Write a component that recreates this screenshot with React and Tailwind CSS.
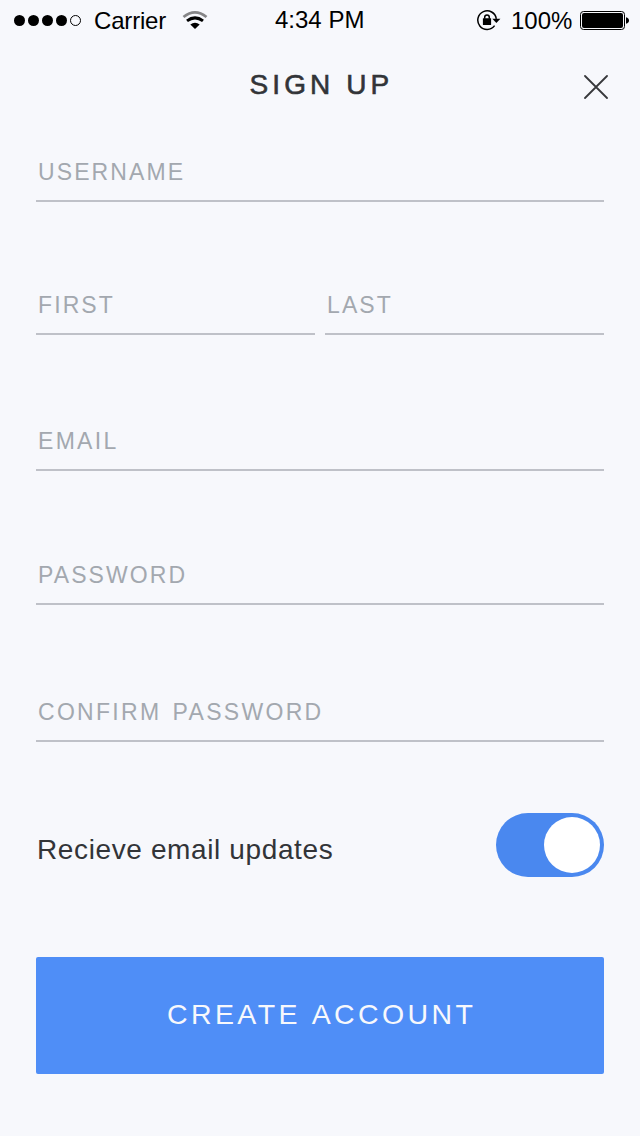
function StatusBar() {
  return (
    <header className="flex h-10 items-start text-black">
      <div className="flex w-[275px] pl-3.5">
        <svg className="mt-3.5 h-3 w-[68px]" viewBox="0 0 68 12">
          <circle cx="5.5" cy="6.5" r="5.5" />
          <circle cx="19.5" cy="6.5" r="5.5" />
          <circle cx="33.5" cy="6.5" r="5.5" />
          <circle cx="47.5" cy="6.5" r="5.5" />
          <circle cx="61.5" cy="6.5" r="5" fill="none" stroke="black" strokeWidth="1" />
        </svg>
        <span className="ml-3 mt-[7px] text-[24px] leading-7 tracking-[-0.18px]">Carrier</span>
        <svg className="ml-4 mt-2.5 h-5 w-[26px]" viewBox="0 0 26 20" fill="none">
          <path d="M1.5 7Q13 -2.2 24.5 7" stroke="#858587" strokeWidth="2.8" />
          <path d="M5 10.9Q13 4.8 21 10.9" stroke="black" strokeWidth="3" />
          <path d="M8.3 14.6Q13 10.8 17.7 14.6L13 19Z" fill="black" />
        </svg>
      </div>
      <span className="mt-1.5 w-[201px] text-[24px] leading-7">4:34 PM</span>
      <svg className="mt-[9px] h-[22px] w-[25px]" viewBox="0 0 25 22" fill="none">
        <path d="M20.3 9.8A9.3 9.3 0 1 0 18.6 16.6" stroke="black" strokeWidth="1.5" />
        <path d="M16.3 9.8H24.4L20.4 14Z" fill="black" />
        <rect x="6.9" y="9.3" width="8.2" height="6.7" rx="0.5" fill="black" />
        <path d="M8.7 9.8V8.2a2.3 2.3 0 0 1 4.6 0V9.8" stroke="black" strokeWidth="1.5" />
      </svg>
      <span className="ml-2.5 mt-[7px] w-[69px] text-[24px] leading-7">100%</span>
      <svg className="mt-[11px] h-[19px] w-[49px]" viewBox="0 0 49 19">
        <rect x="0.5" y="0.5" width="44" height="18" rx="3" fill="none" stroke="black" />
        <rect x="2" y="2" width="41" height="15" rx="2" />
        <path d="M46 6.2Q49 7 49 9.5T46 12.8Z" />
      </svg>
    </header>
  );
}

function Field({ label, type = "text", className = "", tracking = "tracking-[2.1px]" }) {
  return (
    <label className={`block h-11 min-w-0 border-b-2 border-[#bfc1c8] pl-0.5 ${className}`}>
      <input
        type={type}
        aria-label={label}
        placeholder={label}
        className={`block h-7 w-full bg-transparent text-[23px] leading-7 text-[#323438] outline-none placeholder:text-[#a3a8af] ${tracking}`}
      />
    </label>
  );
}

export default function App() {
  return (
    <div className="h-[1136px] w-[640px] overflow-hidden bg-[#f7f8fc] font-['Liberation_Sans',Arial,sans-serif] text-[#323438]">
      <StatusBar />
      <div className="flex h-[118px] items-start pl-[249.5px] pt-[29px]">
        <h1 className="w-[334.5px] text-[28px] leading-8 tracking-[4.1px] [-webkit-text-stroke:0.6px_#323438]">
          SIGN UP
        </h1>
        <button type="button" aria-label="Close" className="mt-1.5">
          <svg className="h-6 w-6" viewBox="0 0 24 24" fill="none" stroke="#37383b" strokeWidth="1.8" strokeLinecap="round">
            <path d="M1 1L23 23M23 1L1 23" />
          </svg>
        </button>
      </div>
      <form className="px-9" onSubmit={(e) => e.preventDefault()}>
        <Field label="USERNAME" />
        <div className="mt-[89px] grid grid-cols-2 gap-2.5">
          <Field label="FIRST" />
          <Field label="LAST" />
        </div>
        <Field label="EMAIL" className="mt-[92px]" tracking="tracking-[2.3px]" />
        <Field label="PASSWORD" type="password" className="mt-[90px]" />
        <Field
          label="CONFIRM PASSWORD"
          type="password"
          className="mt-[93px]"
          tracking="tracking-[2.3px] [word-spacing:2.5px]"
        />
        <div className="mt-[71px] flex h-16 items-start justify-between">
          <span className="ml-px mt-[21px] text-[28px] leading-8 tracking-[0.62px]">Recieve email updates</span>
          <button
            type="button"
            role="switch"
            aria-checked="true"
            aria-label="Recieve email updates"
            className="flex h-16 w-[108px] items-center justify-end rounded-full bg-[#4a88ef] pr-1"
          >
            <span className="size-14 rounded-full bg-white" />
          </button>
        </div>
        <button
          type="submit"
          className="mt-20 flex h-[117px] w-full items-center rounded-[2px] bg-[#4f8ef7] pb-[3px] pl-[131px] text-[28.5px] leading-8 tracking-[3.4px] text-[#f7f8fc] [word-spacing:1px]"
        >
          CREATE ACCOUNT
        </button>
      </form>
    </div>
  );
}
